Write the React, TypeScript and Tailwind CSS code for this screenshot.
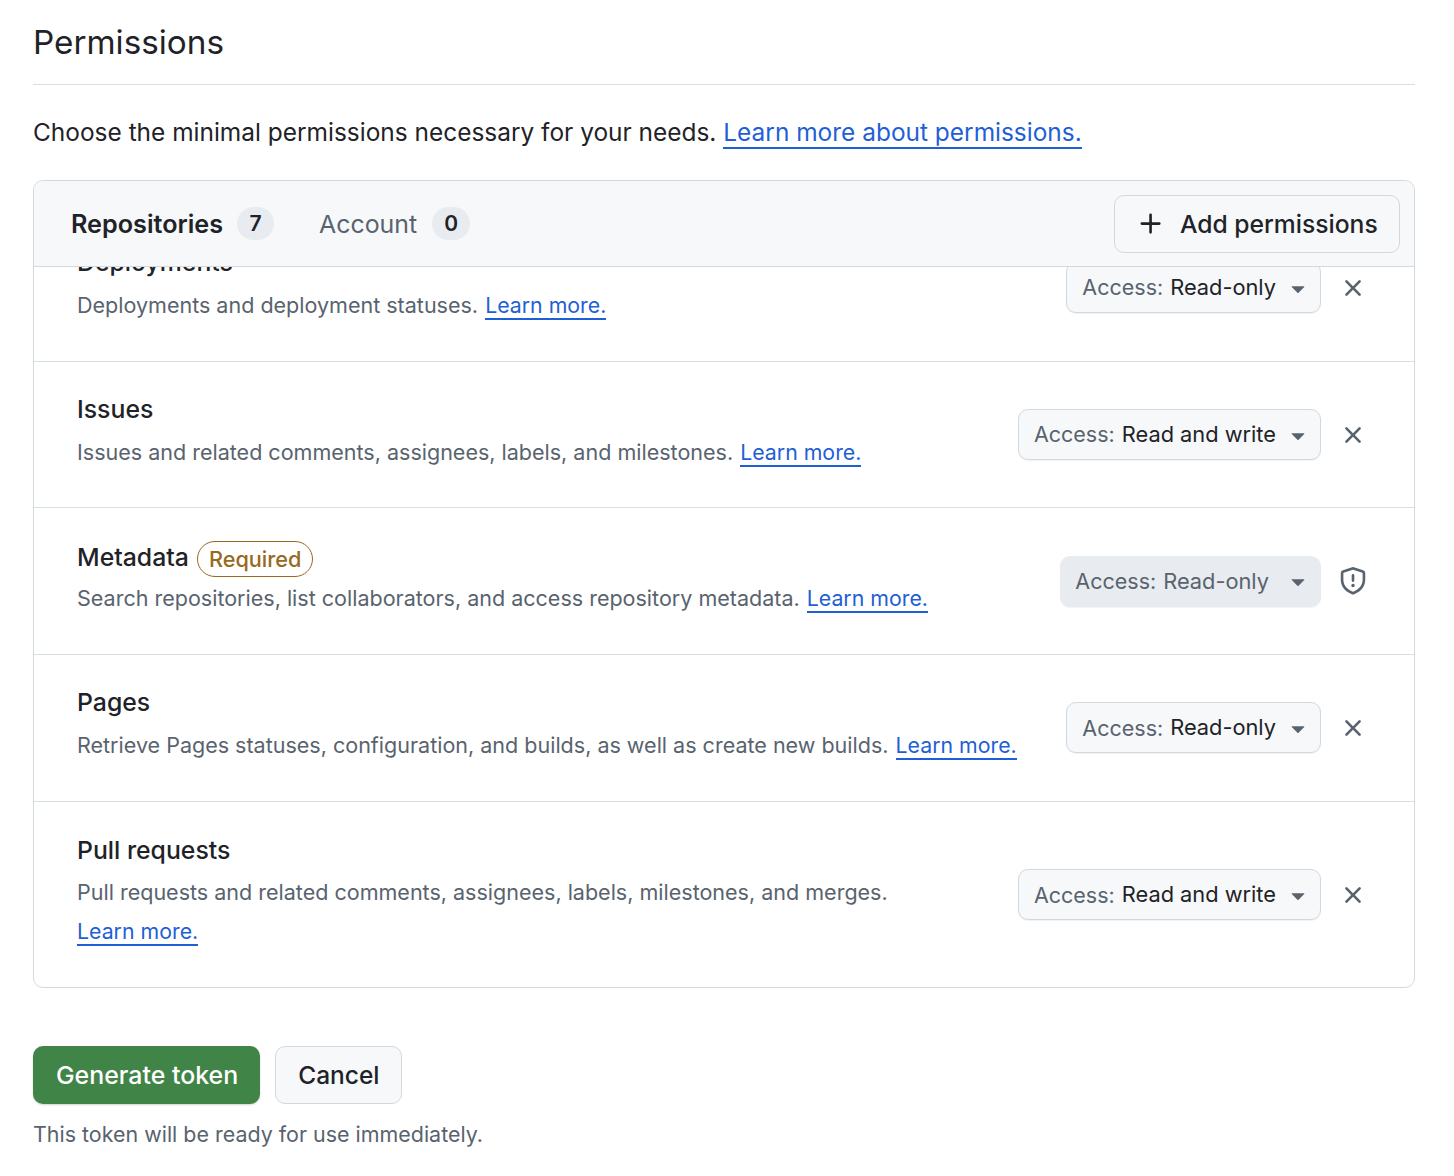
import React from "react";

const X_PATH = "M3.72 3.72a.75.75 0 0 1 1.06 0L8 6.94l3.22-3.22a.749.749 0 0 1 1.275.326.749.749 0 0 1-.215.734L9.06 8l3.22 3.22a.749.749 0 0 1-.326 1.275.749.749 0 0 1-.734-.215L8 9.06l-3.22 3.22a.751.751 0 0 1-1.042-.018.751.751 0 0 1-.018-1.042L6.94 8 3.72 4.78a.75.75 0 0 1 0-1.06Z";
const PLUS_PATH = "M7.75 2a.75.75 0 0 1 .75.75V7h4.25a.75.75 0 0 1 0 1.5H8.5v4.25a.75.75 0 0 1-1.5 0V8.5H2.75a.75.75 0 0 1 0-1.5H7V2.75A.75.75 0 0 1 7.75 2Z";
const CARET_PATH = "m4.427 7.427 3.396 3.396a.25.25 0 0 0 .354 0l3.396-3.396A.25.25 0 0 0 11.396 7H4.604a.25.25 0 0 0-.177.427Z";
const SHIELD_PATH = "M7.467.133a1.748 1.748 0 0 1 1.066 0l5.25 1.68A1.75 1.75 0 0 1 15 3.48V7c0 1.566-.32 3.182-1.303 4.682-.983 1.498-2.585 2.813-5.032 3.855a1.697 1.697 0 0 1-1.33 0c-2.447-1.042-4.049-2.357-5.032-3.855C1.32 10.182 1 8.566 1 7V3.48a1.75 1.75 0 0 1 1.217-1.667Zm.61 1.429a.25.25 0 0 0-.153 0l-5.25 1.68a.25.25 0 0 0-.174.238V7c0 1.358.275 2.666 1.057 3.86.784 1.194 2.121 2.34 4.366 3.297a.196.196 0 0 0 .154 0c2.245-.956 3.582-2.104 4.366-3.298C13.225 9.666 13.5 8.36 13.5 7V3.48a.251.251 0 0 0-.174-.237l-5.25-1.68ZM8.75 4.75v3a.75.75 0 0 1-1.5 0v-3a.75.75 0 0 1 1.5 0ZM9 10.5a1 1 0 1 1-2 0 1 1 0 0 1 2 0Z";

function Octicon({ d, size = 28, className }: { d: string; size?: number; className?: string }) {
  return (
    <svg viewBox="0 0 16 16" width={size} height={size} fill="currentColor" className={className}>
      <path d={d} />
    </svg>
  );
}

function LearnMore({ children = "Learn more." }: { children?: React.ReactNode }) {
  return (
    <a className="border-b-2 border-[#1f5fd6] leading-none text-[#1f5fd6]">{children}</a>
  );
}

interface RowProps {
  title: string;
  description: string;
  access: string;
  required?: boolean;
  wrapLink?: boolean;
  first?: boolean;
}

function AccessSelect({ access, disabled }: { access: string; disabled?: boolean }) {
  return (
    <div
      className={`flex h-[51px] items-center rounded-[10px] text-[21.5px] shadow-[0_1px_1px_rgba(31,35,40,0.06)] ${
        disabled ? "bg-[#e8ebef] pl-[15px] pr-[9px] text-[#59636e]" : "border border-[#d1d9e0] bg-[#f6f8fa] pl-[15px] pr-[8px]"
      }`}
    >
      <span className="text-[#59636e]">Access:</span>
      <span className={`ml-[7px] text-[21.8px] ${disabled ? "text-[#59636e]" : "text-[#1f2328]"}`}>{access}</span>
      <Octicon d={CARET_PATH} size={28} className={`text-[#59636e] ${disabled ? "ml-[15px]" : "ml-[8px]"}`} />
    </div>
  );
}

function PermissionRow({ title, description, access, required, wrapLink, first }: RowProps) {
  return (
    <div className={`flex items-center justify-between pl-[43px] pr-[47px] ${first ? "" : "border-t border-[#d8dee4]"} ${wrapLink ? "h-[187.5px]" : "h-[146.6px]"}`}>
      <div className="-mt-[6px] min-w-0">
        <div className={`flex h-[36px] items-center text-[24.8px] font-medium text-[#1f2328] ${required ? "pt-[2px]" : ""}`}>
          {title}
          {required && (
            <span className="ml-[8px] mt-[4px] flex h-[36px] items-center rounded-full border border-[#966a20] px-[11px] text-[21.7px] font-medium text-[#966a20]">
              Required
            </span>
          )}
        </div>
        <p className={`mt-[5px] text-[21.53px] leading-[39px] text-[#59636e] ${wrapLink ? "w-[850px]" : ""}`}>
          {description}{" "}
          <span className={`text-[21.3px] ${wrapLink ? "" : "ml-[1px]"}`}>
            <LearnMore />
          </span>
        </p>
      </div>
      <div className="flex shrink-0 items-center">
        <AccessSelect access={access} disabled={required} />
        <div className="ml-[18px] flex w-[28px] justify-center">
          {required ? (
            <Octicon d={SHIELD_PATH} size={28} className="text-[#59636e]" />
          ) : (
            <Octicon d={X_PATH} size={28} className="text-[#59636e]" />
          )}
        </div>
      </div>
    </div>
  );
}

const rows: RowProps[] = [
  { title: "Deployments", description: "Deployments and deployment statuses.", access: "Read-only", first: true },
  { title: "Issues", description: "Issues and related comments, assignees, labels, and milestones.", access: "Read and write" },
  { title: "Metadata", description: "Search repositories, list collaborators, and access repository metadata.", access: "Read-only", required: true },
  { title: "Pages", description: "Retrieve Pages statuses, configuration, and builds, as well as create new builds.", access: "Read-only" },
  { title: "Pull requests", description: "Pull requests and related comments, assignees, labels, milestones, and merges.", access: "Read and write", wrapLink: true },
];

function Tab({ label, count, active }: { label: string; count: number; active?: boolean }) {
  return (
    <div className={`flex items-center gap-[14px] ${active ? "text-[25.2px] font-semibold text-[#1f2328]" : "text-[24.9px] text-[#59636e]"}`}>
      <span className="pt-[2px]">{label}</span>
      <span className={`flex h-[33px] items-center justify-center rounded-full bg-[#e8ebef] text-[21px] font-semibold text-[#1f2328] ${active ? "w-[37px]" : "ml-[1px] w-[38px]"}`}>
        {count}
      </span>
    </div>
  );
}

export default function App() {
  return (
    <div className="min-h-[1176px] bg-white pl-[33px] pr-[39px] font-['Inter','Liberation_Sans',sans-serif] text-[#1f2328]">
      <h2 className="flex h-[85px] items-center border-b border-[#d8dee4] pt-[2px] text-[33.25px]">Permissions</h2>
      <p className="mt-[31px] text-[24.45px] leading-[32px]">
        Choose the minimal permissions necessary for your needs. <LearnMore>Learn more about permissions.</LearnMore>
      </p>
      <div className="mt-[32px] overflow-hidden rounded-[10px] border border-[#d1d9e0]">
        <div className="flex h-[86px] items-center justify-between border-b border-[#d1d9e0] bg-[#f6f8fa] pl-[37px] pr-[14px]">
          <div className="flex gap-[45px]">
            <Tab label="Repositories" count={7} active />
            <Tab label="Account" count={0} />
          </div>
          <button className="flex h-[58px] w-[286px] items-center rounded-[10px] border border-[#d1d9e0] bg-[#f6f8fa] pl-[21.5px] pt-[1px] text-[24.65px] font-medium">
            <Octicon d={PLUS_PATH} size={28} className="mr-[15.5px]" />
            Add permissions
          </button>
        </div>
        <div className="h-[720px] overflow-hidden">
          <div className="-mt-[52.8px]">
            {rows.map((row) => (
              <PermissionRow key={row.title} {...row} />
            ))}
          </div>
        </div>
      </div>
      <div className="mt-[58px] flex gap-[15px]">
        <button className="h-[58px] rounded-[10px] bg-[#408447] pl-[23px] pr-[22px] pt-[2px] text-[24.9px] font-medium text-white shadow-[0_1px_2px_rgba(31,35,40,0.2)]">
          Generate token
        </button>
        <button className="h-[58px] rounded-[10px] border border-[#d1d9e0] bg-[#f6f8fa] pl-[22px] pr-[21px] text-[24.5px] font-medium">
          Cancel
        </button>
      </div>
      <p className="mt-[14px] text-[21.45px] text-[#59636e]">This token will be ready for use immediately.</p>
    </div>
  );
}
